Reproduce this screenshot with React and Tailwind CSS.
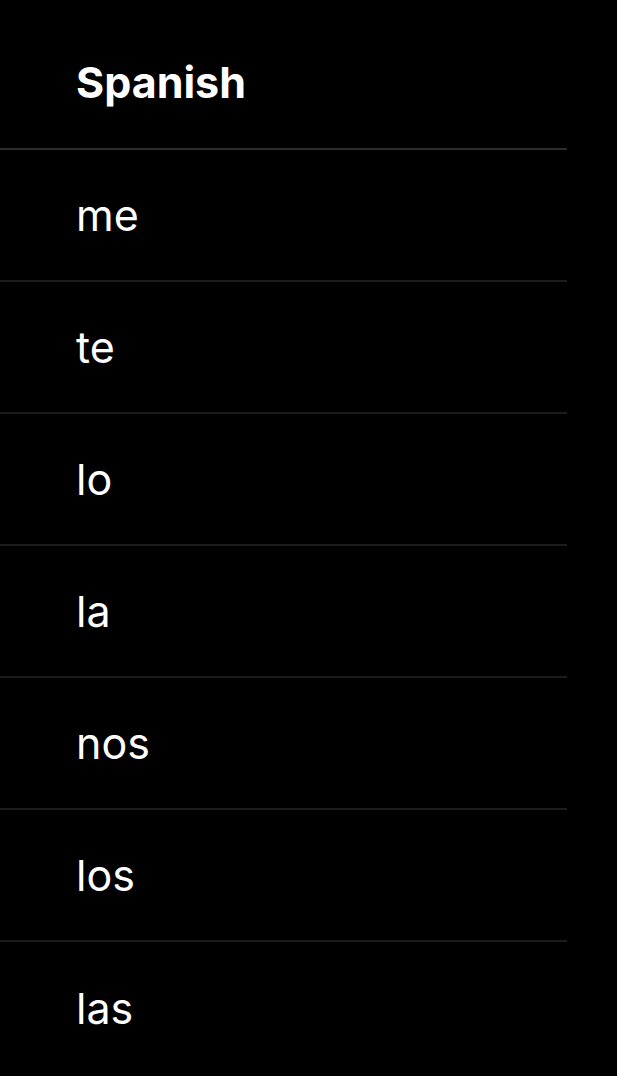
const words = ["me", "te", "lo", "la", "nos", "los", "las"];

export default function App() {
  return (
    <div className="min-h-screen bg-black font-['Inter',sans-serif] text-white">
      <div className="w-[567px]">
        <div className="flex h-[150px] items-center border-b-2 border-[#2c2c2c] pl-[76px] pt-[17px]">
          <span className="text-[43px] font-bold">Spanish</span>
        </div>
        {words.map((w, i) => (
          <div
            key={w}
            className={
              i < words.length - 1
                ? "flex h-[132px] items-center border-b-2 border-[#1c1c1c] pl-[76px]"
                : "flex h-[132px] items-center pl-[76px]"
            }
          >
            <span className="text-[43px] font-normal">{w}</span>
          </div>
        ))}
      </div>
    </div>
  );
}
